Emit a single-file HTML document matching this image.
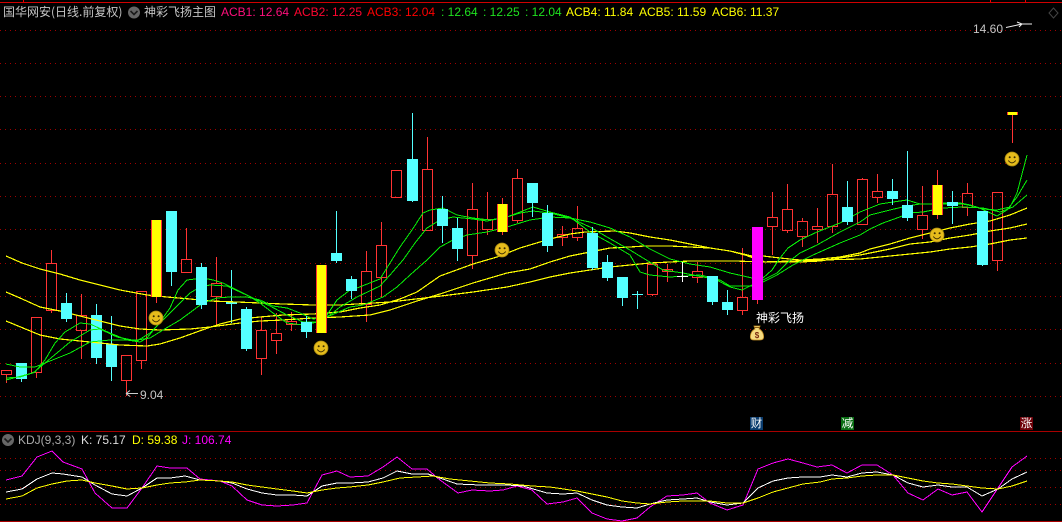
<!DOCTYPE html>
<html><head><meta charset="utf-8"><style>
html,body{margin:0;padding:0;background:#000;width:1062px;height:522px;overflow:hidden}
#w{position:relative;width:1062px;height:522px;background:#000;overflow:hidden}
svg{position:absolute;left:0;top:0}
.t{position:absolute;white-space:pre;font:12px/14px "Liberation Sans",sans-serif}
.c{font-family:"WenQuanYi Zen Hei","Noto Sans CJK SC",sans-serif;font-size:12px;line-height:14px}
.g{color:#c4c4c4}.y{color:#ff0}.n{color:#1fe11f}.m{color:#f0f}
.b{position:absolute;width:13px;height:13px;color:#fff;text-align:center;font:11.5px/13px "WenQuanYi Zen Hei","Noto Sans CJK SC",sans-serif}
</style></head><body><div id="w">
<svg width="1062" height="522" viewBox="0 0 1062 522" shape-rendering="crispEdges" fill="none">
<!-- frame -->
<path d="M0 2.5H1062" stroke="#d00000"/>
<path d="M0 431.5H1062M0 521.5H1062" stroke="#a80000"/>
<path d="M23.5 0V2M990.5 0V2M1025.5 0V2" stroke="#e80000"/>
<path d="M0 30.5H1062M0 63.5H1062M0 96.5H1062M0 129.5H1062M0 163.5H1062M0 196.5H1062M0 229.5H1062M0 263.5H1062M0 296.5H1062M0 329.5H1062M0 363.5H1062M0 396.5H1062M0 458.5H1062M0 470.5H1062M0 487.5H1062M0 504.5H1062" stroke="#a00000" stroke-dasharray="1 4"/>
<path d="M1053.5 8L1058 13L1053.5 18L1049 13Z" stroke="#444" shape-rendering="auto"/>
<!-- red candles -->
<path stroke="#ff3333" d="M1.5 370.5h10v4h-10zM6.5 375V383M31.5 317.5h10v55h-10zM36.5 373V378M46.5 263.5h10v47h-10zM51.5 250V263M51.5 311V313M76.5 315.5h10v15h-10zM81.5 294V315M81.5 331V359M121.5 355.5h10v25h-10zM126.5 381V396M136.5 291.5h10v69h-10zM141.5 361V369M156.5 297V303M181.5 259.5h10v13h-10zM186.5 228V259M211.5 283.5h10v13h-10zM216.5 257V283M216.5 297V326M256.5 330.5h10v28h-10zM261.5 317V330M261.5 359V375M271.5 333.5h10v7h-10zM276.5 313V333M276.5 341V354M286.5 321.5h10v3h-10zM291.5 312V321M291.5 325V331M361.5 271.5h10v33h-10zM366.5 251V271M366.5 305V322M376.5 245.5h10v32h-10zM381.5 222V245M381.5 278V297M391.5 170.5h10v27h-10zM422.5 169.5h10v61h-10zM427.5 137V169M467.5 209.5h10v46h-10zM472.5 183V209M472.5 256V269M482.5 219.5h10v10h-10zM487.5 192V219M487.5 230V235M502.5 198V204M502.5 232V235M512.5 178.5h10v42h-10zM517.5 169V178M517.5 221V223M557.5 234.5h10v3h-10zM562.5 226V234M562.5 238V246M572.5 228.5h10v9h-10zM577.5 206V228M577.5 238V241M647.5 264.5h10v30h-10zM652.5 295V296M662.5 269.5h10v2h-10zM667.5 264V269M667.5 272V282M692.5 271.5h10v6h-10zM697.5 262V271M697.5 278V283M737.5 297.5h10v13h-10zM742.5 248V297M742.5 311V315M757.5 300V304M767.5 217.5h10v9h-10zM772.5 192V217M772.5 227V255M782.5 209.5h10v21h-10zM787.5 184V209M787.5 231V233M797.5 221.5h10v15h-10zM802.5 218V221M802.5 237V247M812.5 226.5h10v3h-10zM817.5 208V226M817.5 230V243M827.5 194.5h10v32h-10zM832.5 164V194M832.5 227V233M857.5 179.5h10v45h-10zM862.5 178V179M872.5 191.5h10v6h-10zM877.5 174V191M877.5 198V203M917.5 215.5h10v14h-10zM922.5 186V215M922.5 230V239M937.5 170V185M937.5 215V219M962.5 193.5h10v14h-10zM967.5 183V193M967.5 208V216M992.5 192.5h10v68h-10zM997.5 261V271M1012.5 115V143"/>
<!-- cyan drawn under the lines -->
<path fill="#54ffff" d="M16 363h11v16h-11zM91 315h11v43h-11zM106 344h11v23h-11zM226 302h11v2h-11z"/>
<path stroke="#54ffff" d="M21.5 379V382M96.5 304V315M96.5 358V364M111.5 316V344M111.5 367V381M231.5 270V323"/>
<!-- MA lines -->
<g stroke="#ffff00" stroke-width="1.2">
<polyline points="6,256 22,263 40,269 60,274 80,280 100,285 120,290 147,295 167,297 190,299 210,301 237,302 283,304 313,305 340,305 390,302 433,297 473,292 507,287 530,282 550,277 570,273 590,270 610,267 630,265 650,263 670,262 690,261 735,261 763,262 820,260 860,259 870,258 890,256 910,254 930,252 950,249 970,247 990,244 1010,240 1027,238"/>
<polyline points="6,292 20,298 40,307 60,311 80,316 100,321 120,326 140,329 160,330 190,329 210,327 240,323 260,321 283,320 313,318 340,317 370,315 390,310 417,301 440,294 473,283 507,273 530,269 550,262 570,256 590,252 610,248 630,247 645,246 670,246 690,247 710,248 730,251 745,255 765,262 783,262 800,262 820,261 840,258 860,255 870,253 890,249 910,244 930,242 950,238 970,235 990,231 1010,228 1027,224"/>
<polyline points="6,321 40,335 60,339 80,341 120,345 147,346 160,344 180,338 205,329 220,324 240,319 260,317 283,315 313,314 340,312 360,308 380,305 400,299 417,292 440,276 473,264 497,257 520,248 530,245 550,239 570,234 585,232 615,231 630,233 650,237 670,240 690,244 710,248 730,251 752,256 763,256 780,258 800,260 820,259 840,257 860,253 870,249 890,244 910,238 930,233 950,228 970,224 990,221 1010,215 1027,208"/>
</g>
<g stroke="#08f008">
<polyline points="6,378 20,377 35,372 45,360 55,343 65,332 80,323 90,324 110,333 127,340 140,342 147,338 160,322 170,308 178,290 187,280 203,278 213,280 223,283 233,288 247,295 260,303 273,313 287,323 303,325 312,323 320,322 327,315 337,300 350,290 357,288 380,279 390,263 400,247 412,230 423,213 430,210 443,208 457,215 473,218 490,220 507,217 520,212 533,207 550,212 570,217 590,232 610,243 630,255 640,272 650,275 670,277 700,275 713,278 730,287 742,290 752,285 763,278 772,270 780,258 788,248 800,240 817,232 840,223 860,212 870,208 880,204 893,202 907,200 920,204 930,204 943,203 960,203 970,205 983,209 997,210 1010,207 1017,193 1027,155"/>
<polyline points="6,380 33,373 45,363 70,342 90,330 100,329 117,337 137,341 150,333 163,320 178,305 190,293 200,287 210,285 227,286 240,292 253,298 270,306 287,315 303,322 317,322 330,315 340,307 357,297 380,286 390,275 403,260 415,243 427,228 440,220 453,217 473,219 487,221 507,217 520,213 533,211 550,213 570,218 590,227 607,237 630,250 643,258 663,270 683,273 703,277 720,280 730,286 752,286 763,280 777,273 787,263 800,253 817,245 840,232 860,222 870,215 890,210 907,206 920,204 943,204 963,204 977,207 997,216 1007,210 1017,197 1027,180"/>
<polyline points="6,364 20,367 35,367 45,363 70,353 90,342 110,340 137,340 150,338 163,330 180,320 203,303 217,298 230,297 247,297 260,300 273,306 287,308 300,313 313,319 327,317 350,307 363,305 383,297 397,287 410,275 427,260 440,247 453,240 467,235 487,232 507,227 520,223 530,220 550,217 570,218 590,222 610,228 630,237 650,249 670,259 690,264 710,267 730,273 752,278 763,282 777,275 793,265 813,255 840,243 860,235 870,229 883,223 897,218 910,213 923,212 943,208 963,207 983,208 1000,212 1013,207 1027,195"/>
</g>
<!-- cyan on top -->
<path fill="#54ffff" d="M61 303h11v16h-11zM166 211h11v61h-11zM196 267h11v38h-11zM241 309h11v40h-11zM301 322h11v10h-11zM331 253h11v8h-11zM346 279h11v12h-11zM407 159h11v42h-11zM437 209h11v17h-11zM452 228h11v21h-11zM527 183h11v20h-11zM542 213h11v33h-11zM587 233h11v35h-11zM602 262h11v16h-11zM617 277h11v21h-11zM632 294h11v1h-11zM707 276h11v26h-11zM722 302h11v8h-11zM842 207h11v15h-11zM887 191h11v8h-11zM902 205h11v13h-11zM947 202h11v4h-11zM977 211h11v54h-11z"/>
<path stroke="#54ffff" d="M66.5 293V303M66.5 319V322M171.5 272V286M201.5 263V267M201.5 305V309M246.5 307V309M246.5 349V351M306.5 316V322M306.5 332V338M336.5 211V253M336.5 261V263M351.5 276V279M351.5 291V299M412.5 113V159M412.5 201V202M442.5 196V209M442.5 226V243M457.5 218V228M457.5 249V261M532.5 203V217M547.5 205V213M547.5 246V252M592.5 227V233M592.5 268V270M607.5 255V262M607.5 278V281M622.5 298V306M637.5 291V309M712.5 302V305M727.5 290V302M727.5 310V315M847.5 181V207M847.5 222V225M892.5 179V191M892.5 199V205M907.5 151V205M907.5 218V221M952.5 191V202M952.5 206V224M982.5 265V266"/>
<path stroke="#fff" d="M677 276.5H688M682.5 262V282"/>
<!-- signal bars -->
<path fill="#ff3333" d="M151 220h11v77h-11zM316 265h11v68h-11zM497 204h11v28h-11zM932 185h11v30h-11zM1007 112h11v3h-11z"/>
<path fill="#ffff00" d="M152 220h9v77h-9zM317 265h9v68h-9zM498 204h9v28h-9zM933 185h9v30h-9zM1008 112h9v3h-9z"/>
<rect x="752" y="227" width="11" height="73" fill="#ff00ff"/>
<!-- arrows -->
<g shape-rendering="auto" stroke="#d8d8d8">
<path d="M126 393.5H138M126 393.5L130 390.5M126 393.5L130 396.5" stroke="#ccc"/>
<path d="M1006 27.5L1022 24M1022 24H1032M1022 24L1017 22M1022 24L1019 27" stroke="#eee"/>
</g>
<!-- KDJ -->
<polyline stroke="#ff00ff" points="6,480 22,476 37,457 52,451 63,462 82,469 95,493 112,508 127,508 142,488 157,466 170,468 187,468 200,479 220,481 232,486 247,500 262,505 277,506 293,505 307,503 322,475 337,471 350,477 368,476 383,467 397,457 412,469 427,469 440,480 458,493 472,490 490,491 503,490 517,486 532,490 547,504 563,502 577,498 592,513 607,519 622,521 637,518 650,507 667,496 683,495 697,493 710,503 727,510 743,505 758,469 773,463 788,459 803,463 817,467 832,465 847,473 862,465 877,465 893,475 908,493 923,500 938,489 952,495 967,492 982,512 998,488 1012,467 1027,456"/>
<polyline stroke="#ffffff" points="6,492 22,489 37,479 52,473 63,474 82,477 95,485 112,494 127,496 142,488 157,478 170,478 185,476 200,480 220,481 232,483 247,489 262,493 277,495 293,495 307,496 322,486 337,483 350,483 368,482 383,478 397,471 412,474 428,474 440,478 457,484 480,485 507,485 523,486 547,493 563,494 577,493 592,500 607,505 622,507 637,508 650,504 667,500 683,499 697,498 710,502 727,505 743,503 758,488 773,481 788,478 803,477 820,477 832,475 847,477 862,473 877,472 893,475 908,483 923,487 938,485 952,487 967,487 982,496 998,489 1012,479 1027,472"/>
<polyline stroke="#ffff00" points="6,499 22,496 37,488 52,484 67,481 82,480 95,483 112,486 127,489 142,488 157,485 170,483 185,482 200,480 220,481 232,482 247,485 262,487 277,489 293,491 307,493 322,490 337,488 350,487 368,485 383,482 400,478 417,477 433,476 450,479 470,481 490,483 510,484 532,486 550,487 577,491 592,494 607,497 622,501 637,503 650,504 667,502 683,501 710,501 727,503 743,503 758,498 773,492 788,488 803,484 820,482 832,479 847,478 862,476 877,475 893,475 908,478 923,481 938,483 952,484 967,486 982,488 998,489 1012,486 1027,481"/>
<!-- chevron circles, smileys, bag -->
<g shape-rendering="auto">
<circle cx="134" cy="12.5" r="6" fill="#666"/><path d="M130.5 11L134 14.5L137.500 11" stroke="#1a1a1a" stroke-width="1.6"/>
<circle cx="8" cy="440" r="6" fill="#666"/><path d="M4.500 438.500L8 442L11.500 438.500" stroke="#1a1a1a" stroke-width="1.6"/>
<defs><g id="s"><circle r="7" fill="#e6bc1c"/><circle r="7" fill="none" stroke="#a98a10" stroke-width=".8"/><circle cx="-2.300" cy="-1.700" r="1" fill="#3a2c00"/><circle cx="2.600" cy="-1.700" r="1" fill="#3a2c00"/><path d="M-3.700 1.500Q0 6.200 3.700 1.500" stroke="#3a2c00" stroke-width="1"/></g></defs>
<use href="#s" x="156" y="318"/><use href="#s" x="321" y="348"/><use href="#s" x="502" y="250"/><use href="#s" x="937" y="235"/><use href="#s" x="1012" y="159"/>
<path d="M754 326H760L759 329C763 331 764 335 763.500 338Q763 340 760 340H754Q751 340 750.500 338C750 335 751 331 755 329Z" fill="#f5dc80" stroke="#c08a20" stroke-width=".8"/>
<path d="M754 327.500H760" stroke="#8a5a10" stroke-width="1"/>
<text x="757" y="338" font-family="Liberation Sans,sans-serif" font-size="8" font-weight="bold" fill="#7a2a10" text-anchor="middle">$</text>
</g>
</svg>
<div class="t c g" style="left:3px;top:5px">国华网安(日线.前复权)</div>
<div class="t c g" style="left:144px;top:5px">神彩飞扬主图</div>
<div class="t" style="left:221px;top:5px;color:#ff0f7c">ACB1: 12.64</div>
<div class="t" style="left:294px;top:5px;color:#ff0530">ACB2: 12.25</div>
<div class="t" style="left:367px;top:5px;color:#ff0000">ACB3: 12.04</div>
<div class="t n" style="left:441px;top:5px">: 12.64</div>
<div class="t n" style="left:483px;top:5px">: 12.25</div>
<div class="t n" style="left:525px;top:5px">: 12.04</div>
<div class="t y" style="left:566px;top:5px">ACB4: 11.84</div>
<div class="t y" style="left:639px;top:5px">ACB5: 11.59</div>
<div class="t y" style="left:712px;top:5px">ACB6: 11.37</div>
<div class="t g" style="left:973px;top:22px">14.60</div>
<div class="t g" style="left:140px;top:388px">9.04</div>
<div class="t c" style="left:756px;top:311px;color:#fff">神彩飞扬</div>
<div class="b" style="left:750px;top:417px;background:#0a3c6e">财</div>
<div class="b" style="left:841px;top:417px;background:#0a6e14">减</div>
<div class="b" style="left:1020px;top:417px;background:#6e0008">涨</div>
<div class="t" style="left:18px;top:433px;color:#aaa">KDJ(9,3,3)</div>
<div class="t" style="left:81px;top:433px;color:#ddd">K: 75.17</div>
<div class="t y" style="left:132px;top:433px">D: 59.38</div>
<div class="t m" style="left:182px;top:433px">J: 106.74</div>
</div></body></html>
